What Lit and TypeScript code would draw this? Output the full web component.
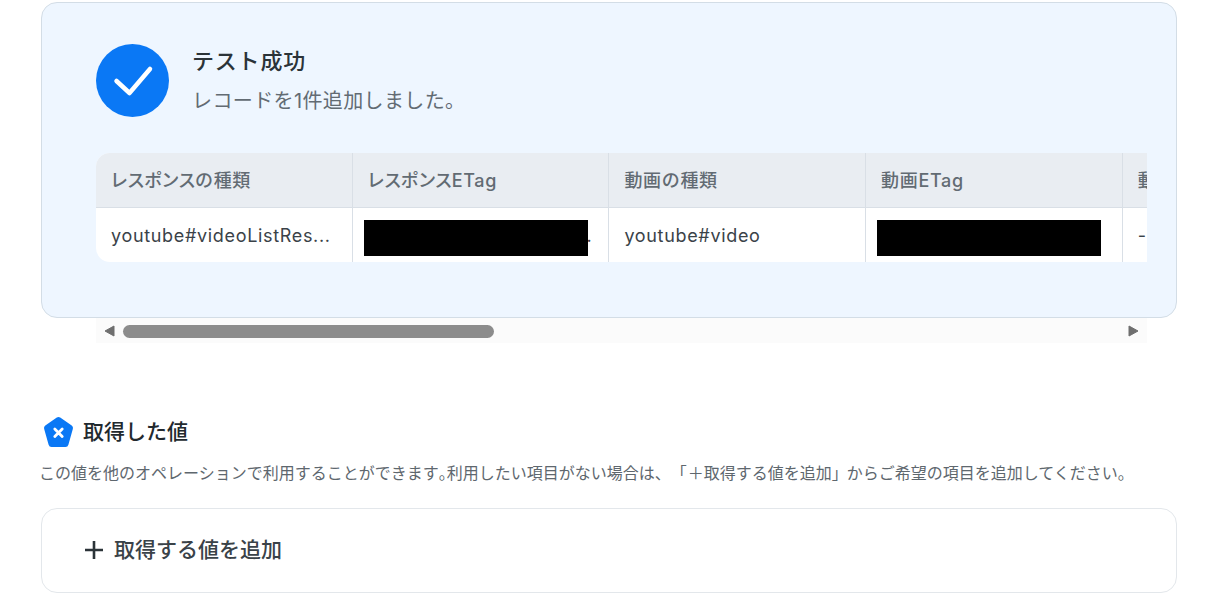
import { LitElement, html, css } from "lit";
import { customElement } from "lit/decorators.js";

@customElement("app-root")
export class AppRoot extends LitElement {
  static styles = css`
    :host {
      display: block;
      width: 1229px;
      height: 614px;
      overflow: hidden;
      background: #fff;
      font-family: Inter, "Noto Sans CJK JP", sans-serif;
      color: #2b3338;
      box-sizing: border-box;
      padding: 2px 52px 0 41px;
    }
    * { box-sizing: border-box; }
    .panel {
      height: 316px;
      background: #eef6ff;
      border: 1px solid #d3dde6;
      border-radius: 16px;
      padding: 41px 29px 0 54px;
    }
    .head { display: flex; align-items: center; gap: 23px; height: 73px; }
    .check { width: 73px; height: 73px; flex: none; display: block; }
    .titles { display: flex; flex-direction: column; gap: 14px; padding-top: 1px; }
    .title { font-size: 22px; font-weight: 500; line-height: 26px; letter-spacing: 0.8px; color: #2b3338; }
    .sub { font-size: 20px; line-height: 26px; letter-spacing: 0.38px; color: #626b73; font-weight: 400; }
    .table {
      margin-top: 36px;
      display: grid;
      grid-template-columns: repeat(4, 256.7px) 25px;
      overflow: hidden;
      border-radius: 14px 0 0 14px;
      background: #fff;
    }
    .th {
      height: 55px;
      display: flex;
      align-items: center;
      padding: 0 14px 2px 15px;
      background: #e9edf2;
      border-right: 1px solid #d9dfe6;
      border-bottom: 1px solid #d9dfe6;
      font-size: 18px;
      letter-spacing: 0.67px;
      font-weight: 500;
      color: #626b73;
      white-space: nowrap;
      overflow: hidden;
    }
    .k { letter-spacing: -0.93px; margin-left: -1px; }
    .td {
      height: 54px;
      display: flex;
      align-items: center;
      padding: 0 15px;
      border-right: 1px solid #d9dfe6;
      font-size: 18px;
      letter-spacing: 0.67px;
      color: #3a4248;
      white-space: nowrap;
      overflow: hidden;
      position: relative;
    }
    .td.last, .th.last { border-right: none; }
    .redact {
      position: absolute;
      left: 11.2px;
      top: 12px;
      width: 224px;
      height: 36px;
      background: #000;
    }
    .tail { margin-left: 207px; }
    .bar {
      margin: 0 30px 0 55px;
      height: 25px;
      background: #fbfbfb;
      display: flex;
      align-items: center;
      padding: 1px 8px 0;
      gap: 8px;
    }
    .thumb { width: 371px; height: 13px; border-radius: 7px; background: #8c8c8c; }
    .spacer { flex: 1; }
    .arrow { display: block; width: 11px; height: 12px; flex: none; }
    .section { display: flex; align-items: center; gap: 7px; margin-top: 73px; margin-left: 2px; height: 32px; }
    .pent { width: 33px; height: 32px; display: block; flex: none; }
    .section-title { font-size: 21px; font-weight: 500; color: #22292e; line-height: 32px; }
    .desc { font-size: 16px; line-height: 24px; color: #5e676e; margin-top: 13px; margin-left: -2px; white-space: nowrap; }
    .p { font-feature-settings: "halt"; }
    .open { text-spacing-trim: space-all; }
    .plus-char { margin-left: 1px; }
    .close { font-feature-settings: "halt"; margin-right: 7px; }
    .add {
      margin-top: 23px;
      height: 85px;
      border: 1px solid #e3e7eb;
      border-radius: 16px;
      display: flex;
      align-items: center;
      padding: 0 41px;
      gap: 9px;
      font-size: 21px;
      font-weight: 500;
      color: #3a4248;
      background: #fff;
    }
    .add-label { padding-bottom: 6px; }
    .plus { width: 22px; height: 22px; display: block; flex: none; margin-top: -2px; }
  `;

  render() {
    return html`
      <div class="panel">
        <div class="head">
          <svg class="check" viewBox="0 0 73 73">
            <circle cx="36.5" cy="36.5" r="36.5" fill="#0a78f5"></circle>
            <path d="M20.5 37 L33.5 49 L54 25" fill="none" stroke="#fff" stroke-width="4.5" stroke-linecap="round" stroke-linejoin="round"></path>
          </svg>
          <div class="titles">
            <div class="title">テスト成功</div>
            <div class="sub">レコードを1件追加しました。</div>
          </div>
        </div>
        <div class="table">
          <div class="th"><span><span class="k">レスポンス</span>の種類</span></div>
          <div class="th"><span><span class="k">レスポンス</span>ETag</span></div>
          <div class="th">動画の種類</div>
          <div class="th">動画ETag</div>
          <div class="th last">動画ID</div>
          <div class="td">youtube#videoListRes...</div>
          <div class="td"><span class="redact"></span><span class="tail">...</span></div>
          <div class="td">youtube#video</div>
          <div class="td"><span class="redact"></span></div>
          <div class="td last">-</div>
        </div>
      </div>
      <div class="bar">
        <svg class="arrow" viewBox="0 0 11 12"><path d="M10 1 V11 L1 6 Z" fill="#6f6f6f" stroke="#6f6f6f" stroke-linejoin="round"></path></svg>
        <div class="thumb"></div>
        <div class="spacer"></div>
        <svg class="arrow" viewBox="0 0 11 12"><path d="M1 1 V11 L10 6 Z" fill="#6f6f6f" stroke="#6f6f6f" stroke-linejoin="round"></path></svg>
      </div>
      <div class="section">
        <svg class="pent" viewBox="0 0 33 32">
          <path d="M15.5 4 L27 12 L22.5 28 H8.5 L4 12 Z" fill="#0a78f5" stroke="#0a78f5" stroke-width="6" stroke-linejoin="round"></path>
          <path d="M11.8 13 L19.2 20.5 M19.2 13 L11.8 20.5" stroke="#fff" stroke-width="2.8" stroke-linecap="round"></path>
        </svg>
        <div class="section-title">取得した値</div>
      </div>
      <div class="desc">この値を他のオペレーションで利用することができます<span class="p">。</span>利用したい項目がない場合は<span class="open">、「</span><span class="plus-char">＋</span>取得する値を追加<span class="close">」</span>からご希望の項目を追加してください。</div>
      <div class="add">
        <svg class="plus" viewBox="0 0 22 22"><path d="M11 2 V20 M2 11 H20" stroke="#2b3338" stroke-width="2.6"></path></svg>
        <span class="add-label">取得する値を追加</span>
      </div>
    `;
  }
}
